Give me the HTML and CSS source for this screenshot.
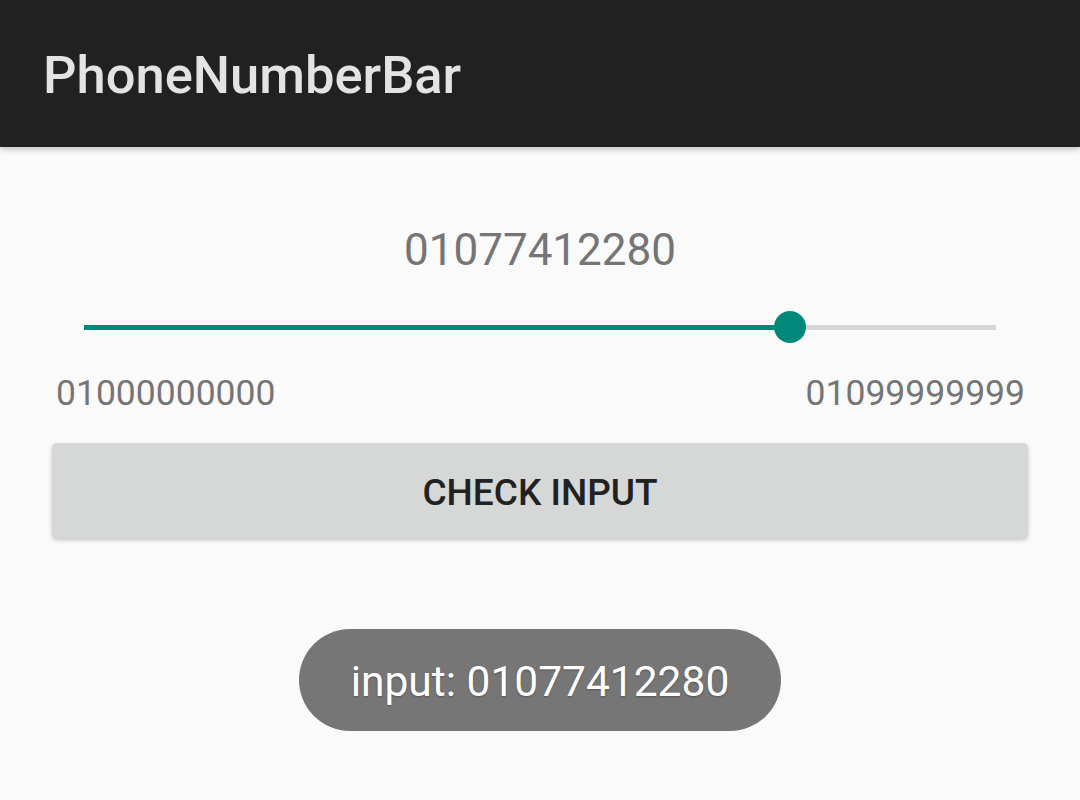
FILE: index.html
```html
<!DOCTYPE html>
<html>
<head>
<meta charset="utf-8">
<link rel="stylesheet" href="styles.css">
</head>
<body>
<header class="appbar"><h1 class="title">PhoneNumberBar</h1></header>
<main class="content">
  <div class="value">01077412280</div>
  <div class="slider">
    <div class="track">
      <div class="fill" style="width: 77.4%"></div>
      <div class="thumb" style="left: 77.4%"></div>
    </div>
  </div>
  <div class="labels"><span>01000000000</span><span>01099999999</span></div>
  <button class="btn">CHECK INPUT</button>
  <div class="toast-wrap"><div class="toast">input: 01077412280</div></div>
</main>
</body>
</html>
```
FILE: styles.css
```css
html, body { margin: 0; padding: 0; }
body {
  width: 1080px;
  height: 800px;
  background: #fafafa;
  font-family: Roboto, "Noto Sans", sans-serif;
  overflow: hidden;
}
.appbar {
  height: 147px;
  background: #212121;
  box-shadow: 0 2px 6px rgba(0,0,0,0.25);
  display: flex;
  align-items: center;
  padding-left: 43px;
  position: relative;
  z-index: 1;
}
.title {
  margin: 0;
  color: #e3e3e3;
  font-size: 52.5px;
  font-weight: 500;
  letter-spacing: 0;
  line-height: 1;
  padding-top: 3px;
}
.content {
  padding: 77px 52px 0;
  display: flex;
  flex-direction: column;
}
.value {
  text-align: center;
  color: #757575;
  font-size: 44px;
  line-height: 52px;
}
.slider {
  margin: 35px 32px 0;
  height: 32px;
  display: flex;
  align-items: center;
}
.track {
  position: relative;
  width: 100%;
  height: 5px;
  background: #d6d6d6;
}
.fill {
  height: 100%;
  background: #00897b;
}
.thumb {
  position: absolute;
  top: 50%;
  width: 32px;
  height: 32px;
  border-radius: 50%;
  background: #00897b;
  transform: translate(-50%, -50%);
}
.labels {
  margin: 29px 3px 0 4px;
  display: flex;
  justify-content: space-between;
  color: #757575;
  font-size: 35.5px;
  line-height: 42px;
}
.btn {
  margin-top: 29px;
  height: 95px;
  border: none;
  border-radius: 5px;
  background: #d6d7d7;
  box-shadow: 0 2px 4px rgba(0,0,0,0.22);
  color: #212121;
  font-family: Roboto, "Noto Sans", sans-serif;
  font-size: 37px;
  font-weight: 500;
  padding: 3px 0 0;
}
.toast-wrap {
  margin-top: 91px;
  display: flex;
  justify-content: center;
}
.toast {
  width: 482px;
  height: 102px;
  border-radius: 51px;
  background: #767676;
  color: #fff;
  font-size: 42.5px;
  display: flex;
  align-items: center;
  justify-content: center;
  padding-top: 3px;
  box-sizing: border-box;
  text-shadow: 0 1px 2px rgba(0,0,0,0.3);
}
```
